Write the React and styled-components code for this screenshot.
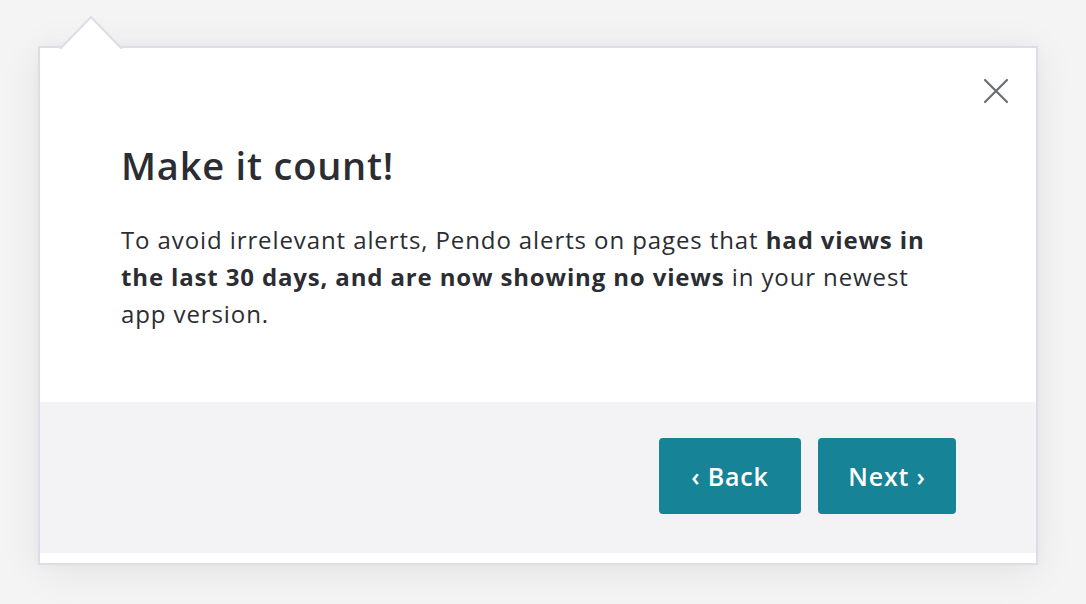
import React from "react";
import styled, { createGlobalStyle } from "styled-components";

const Global = createGlobalStyle`
  html, body { margin: 0; padding: 0; background: #f4f4f4; }
  body { font-family: "Open Sans", Lato, sans-serif; -webkit-font-smoothing: antialiased; }
`;

const Page = styled.div`
  width: 1086px;
  height: 604px;
  box-sizing: border-box;
  padding: 46px 0 0 38px;
  background: #f4f4f4;
  overflow: hidden;
`;

const Card = styled.div`
  position: relative;
  width: 1000px;
  height: 519px;
  box-sizing: border-box;
  border: 2px solid #dcdde8;
  background: #fff;
  box-shadow: 0 6px 40px rgba(0, 0, 0, 0.07), 0 0 12px rgba(0, 0, 0, 0.03);
  display: flex;
  flex-direction: column;
  padding-bottom: 10px;
`;

const Caret = styled.svg`
  position: absolute;
  left: 20px;
  top: -32px;
  width: 64px;
  height: 34px;
  overflow: visible;
`;

const Close = styled.button`
  position: absolute;
  top: 28px;
  right: 25px;
  width: 30px;
  height: 30px;
  padding: 0;
  border: 0;
  background: none;
  display: flex;
  align-items: center;
  justify-content: center;
  cursor: pointer;
`;

const Body = styled.div`
  flex: 1;
  padding: 93px 60px 0 81px;
  color: #2b2d33;
`;

const Title = styled.h1`
  margin: 0;
  font-size: 38px;
  font-weight: 600;
  line-height: 48px;
  letter-spacing: 0.8px;
`;

const Text = styled.p`
  margin: 32px 0 0;
  font-size: 24px;
  line-height: 37px;
  font-weight: 400;
  width: 812px;
  letter-spacing: 0.9px;
  b { font-weight: 700; letter-spacing: 0.85px; }
`;

const Footer = styled.div`
  height: 151px;
  background: #f3f3f5;
  display: flex;
  justify-content: flex-end;
  align-items: flex-start;
  gap: 17px;
  padding: 36px 80px 0 0;
  box-sizing: border-box;
`;

const Btn = styled.button`
  width: ${(p) => p.$w}px;
  height: 76px;
  border: 0;
  border-radius: 4px;
  background: #178397;
  color: #fff;
  font-family: "Open Sans", Lato, sans-serif;
  font-size: 25px;
  font-weight: 600;
  letter-spacing: 0.8px;
  cursor: pointer;
  padding: 0;
`;

export default function App() {
  return (
    <>
      <Global />
      <Page>
        <Card>
          <Caret viewBox="0 0 64 34">
            <polygon points="0,33 31,1 62,33" fill="#fff" />
            <polyline points="0,33 31,1 62,33" fill="none" stroke="#dcdde8" strokeWidth="2" />
            <rect x="0" y="33" width="64" height="4" fill="#fff" />
          </Caret>
          <Close aria-label="Close">
            <svg width="26" height="26" viewBox="0 0 26 26">
              <path d="M2 2 L24 24 M24 2 L2 24" stroke="#6b6d73" strokeWidth="2.2" strokeLinecap="round" />
            </svg>
          </Close>
          <Body>
            <Title>Make it count!</Title>
            <Text>
              To avoid irrelevant alerts, Pendo alerts on pages that <b>had views in the last 30 days, and are now showing no views</b> in your newest app version.
            </Text>
          </Body>
          <Footer>
            <Btn $w={142}>‹ Back</Btn>
            <Btn $w={138}>Next ›</Btn>
          </Footer>
        </Card>
      </Page>
    </>
  );
}
